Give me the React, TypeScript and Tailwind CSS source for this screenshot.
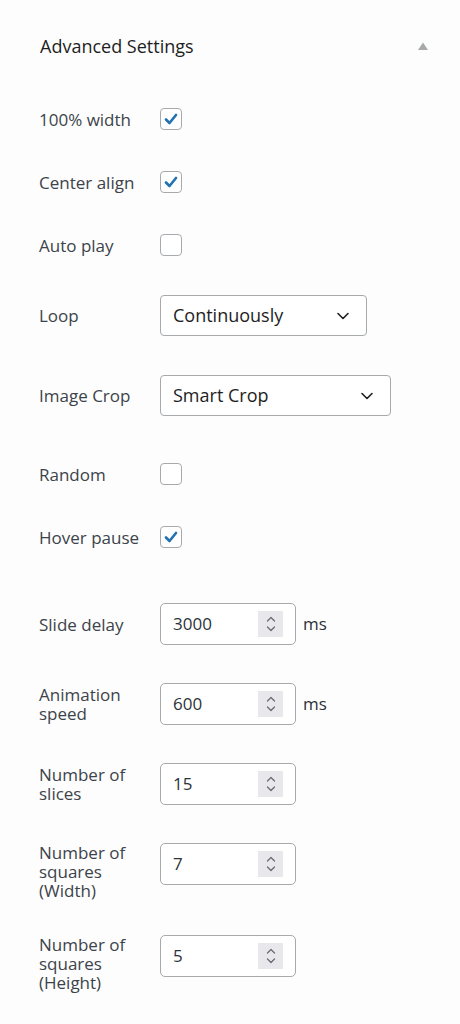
import React, { useState } from 'react';

const font = { fontFamily: '"Open Sans", "Noto Sans", sans-serif' };

function Checkbox({ checked, onChange }: { checked: boolean; onChange: () => void }) {
  return (
    <button
      type="button"
      onClick={onChange}
      className="flex h-[22px] w-[22px] items-center justify-center rounded-[4px] border-[1.5px] border-[#a7aaad] bg-white"
    >
      {checked && (
        <svg width="16" height="16" viewBox="0 0 16 16" fill="none">
          <path d="M3 8.5 L6.5 12 L13 4" stroke="#2271b1" strokeWidth="2.6" strokeLinecap="round" strokeLinejoin="round" />
        </svg>
      )}
    </button>
  );
}

function Chevron() {
  return (
    <svg width="14" height="14" viewBox="0 0 14 14" fill="none">
      <path d="M2 4.5 L7 9.5 L12 4.5" stroke="#1e1e1e" strokeWidth="1.6" strokeLinecap="round" strokeLinejoin="round" />
    </svg>
  );
}

function Select({ value, width }: { value: string; width: string }) {
  return (
    <div className={`flex h-[41px] items-center justify-between rounded-[4px] border border-[#a7aaad] bg-white pl-3 pr-4 ${width}`}>
      <span className="text-[18px] text-[#1e1e1e]">{value}</span>
      <Chevron />
    </div>
  );
}

function NumberInput({ value, unit }: { value: string; unit?: string }) {
  return (
    <div className="flex items-center gap-[7px]">
      <div className="flex h-[42px] w-[136px] items-center justify-between rounded-[5px] border border-[#a7aaad] bg-white pl-3 pr-3">
        <span className="text-[17px] text-[#2c3338]">{value}</span>
        <div className="flex h-[26px] w-[25px] items-center justify-center bg-[#e8e8ec]">
          <svg width="12" height="20" viewBox="0 0 12 20" fill="none">
            <path d="M2.5 7 L6 3.5 L9.5 7" stroke="#6b6b70" strokeWidth="1.3" strokeLinecap="round" strokeLinejoin="round" />
            <path d="M2.5 13 L6 16.5 L9.5 13" stroke="#6b6b70" strokeWidth="1.3" strokeLinecap="round" strokeLinejoin="round" />
          </svg>
        </div>
      </div>
      {unit && <span className="text-[17px] text-[#2c3338]">{unit}</span>}
    </div>
  );
}

function Row({
  label,
  children,
  className = '',
  align = 'items-center',
}: {
  label: React.ReactNode;
  children: React.ReactNode;
  className?: string;
  align?: string;
}) {
  return (
    <div className={`flex ${align} ${className}`}>
      <div className="w-[121px] shrink-0 pr-3 text-[17px] leading-[19px] text-[#3c434a]">{label}</div>
      {children}
    </div>
  );
}

export default function App() {
  const [checks, setChecks] = useState({
    fullWidth: true,
    center: true,
    autoPlay: false,
    random: false,
    hoverPause: true,
  });

  const toggle = (k: keyof typeof checks) => setChecks(prev => ({ ...prev, [k]: !prev[k] }));

  return (
    <div className="min-h-[1024px] w-[460px] bg-[#fdfdfd] pl-[39px] pr-[30px]" style={font}>
      <div className="flex h-[92px] items-center justify-between pl-[1px]">
        <h2 className="text-[18px] text-[#1e1e1e]">Advanced Settings</h2>
        <svg width="12" height="10" viewBox="0 0 12 10" className="mr-[1px]">
          <path d="M1 9 L6 1.5 L11 9 Z" fill="#a7aaad" />
        </svg>
      </div>

      <Row label="100% width" className="mt-[15px] h-[24px]">
        <Checkbox checked={checks.fullWidth} onChange={() => toggle('fullWidth')} />
      </Row>
      <Row label="Center align" className="mt-[39px] h-[24px]">
        <Checkbox checked={checks.center} onChange={() => toggle('center')} />
      </Row>
      <Row label="Auto play" className="mt-[39px] h-[24px]">
        <Checkbox checked={checks.autoPlay} onChange={() => toggle('autoPlay')} />
      </Row>
      <Row label="Loop" className="mt-[38px]">
        <Select value="Continuously" width="w-[207px]" />
      </Row>
      <Row label="Image Crop" className="mt-[39px]">
        <Select value="Smart Crop" width="w-[231px]" />
      </Row>
      <Row label="Random" className="mt-[46px] h-[24px]">
        <Checkbox checked={checks.random} onChange={() => toggle('random')} />
      </Row>
      <Row label="Hover pause" className="mt-[39px] h-[24px]">
        <Checkbox checked={checks.hoverPause} onChange={() => toggle('hoverPause')} />
      </Row>

      <Row label="Slide delay" className="mt-[54px]">
        <NumberInput value="3000" unit="ms" />
      </Row>
      <Row label="Animation speed" className="mt-[38px]">
        <NumberInput value="600" unit="ms" />
      </Row>
      <Row label="Number of slices" className="mt-[38px]">
        <NumberInput value="15" />
      </Row>
      <Row label="Number of squares (Width)" className="mt-[38px]" align="items-start">
        <NumberInput value="7" />
      </Row>
      <Row label="Number of squares (Height)" className="mt-[35px]" align="items-start">
        <NumberInput value="5" />
      </Row>
    </div>
  );
}
